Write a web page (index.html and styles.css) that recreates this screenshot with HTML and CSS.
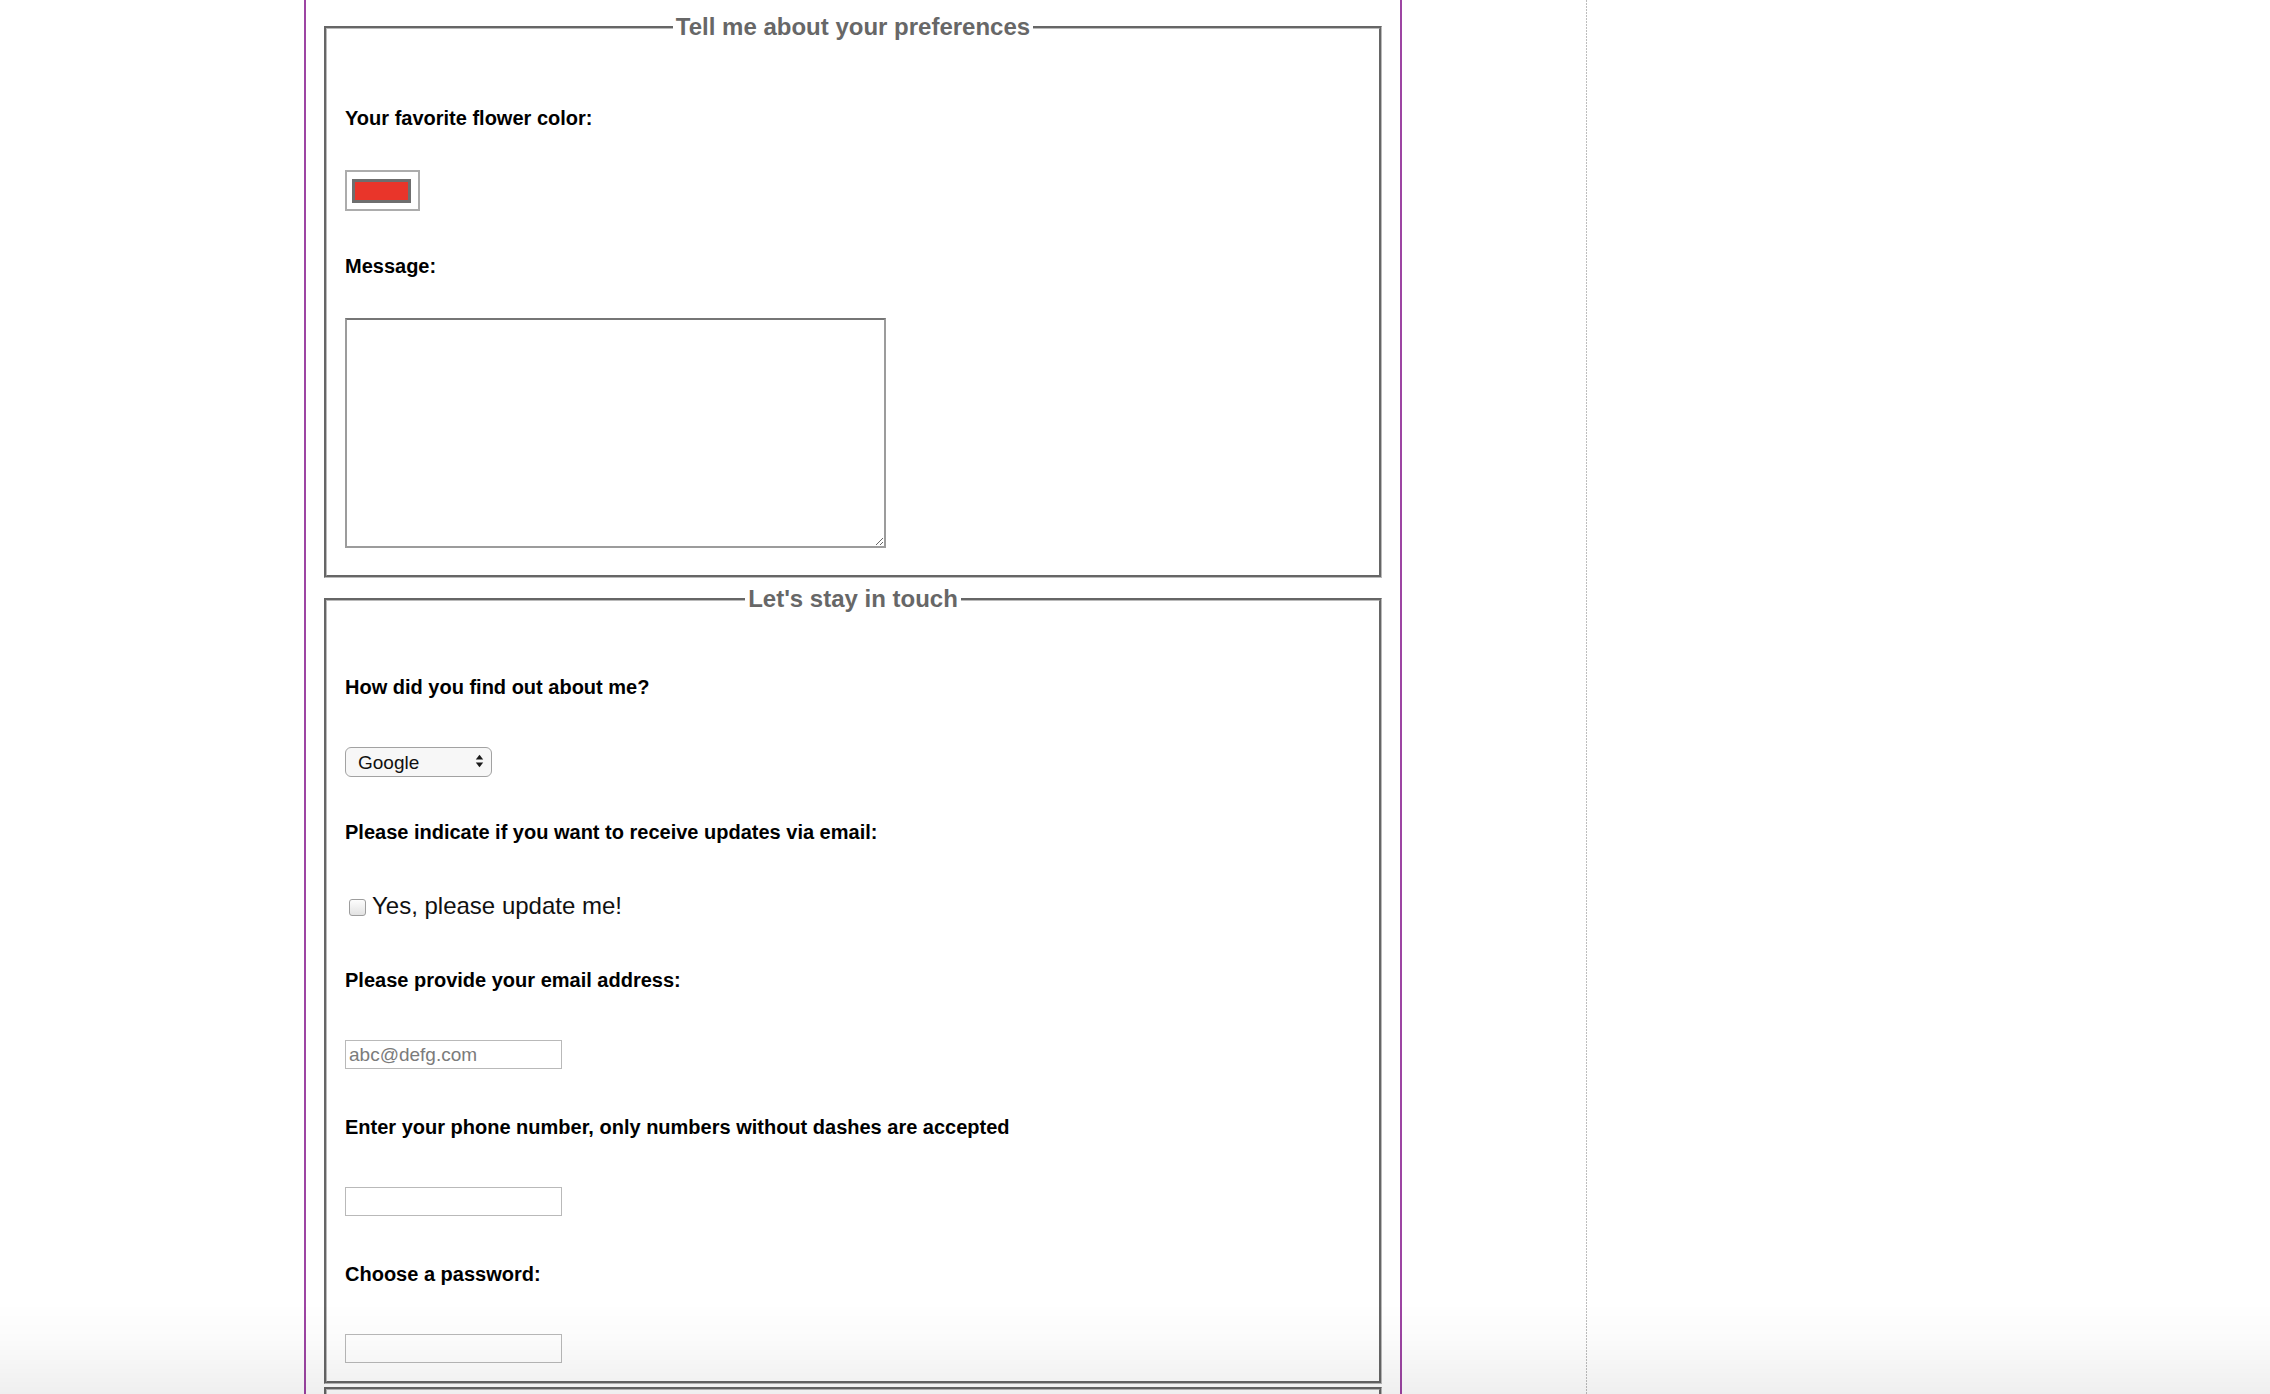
FILE: index.html
```html
<!DOCTYPE html>
<html lang="en">
<head>
<meta charset="utf-8">
<title>Contact form</title>
<link rel="stylesheet" href="styles.css">
</head>
<body>
<div class="page">
  <main class="main">
    <fieldset class="fs fs-first">
      <legend class="legend">Tell me about your preferences</legend>
      <label class="lbl lbl-first" for="flower">Your favorite flower color:</label>
      <div class="ctrl ctrl-tight"><input class="color" id="flower" type="color" value="#e9352a"></div>
      <label class="lbl lbl-short" for="msg">Message:</label>
      <div class="ctrl ctrl-tight"><textarea class="area" id="msg"></textarea></div>
    </fieldset>

    <fieldset class="fs fs-second">
      <legend class="legend">Let's stay in touch</legend>
      <label class="lbl lbl-second" for="source">How did you find out about me?</label>
      <div class="ctrl">
        <span class="sel-wrap">
          <select class="sel" id="source">
            <option>Google</option>
            <option>Friend</option>
            <option>Other</option>
          </select>
          <svg class="sel-arrows" width="9" height="14" viewBox="0 0 9 14" aria-hidden="true">
            <path d="M4.5 0.8 L8.2 5.6 L0.8 5.6 Z" fill="#1a1a1a"/>
            <path d="M4.5 13.2 L8.2 8.4 L0.8 8.4 Z" fill="#1a1a1a"/>
          </svg>
        </span>
      </div>
      <label class="lbl lbl-short" for="updates">Please indicate if you want to receive updates via email:</label>
      <div class="ctrl check-row">
        <input class="check" id="updates" type="checkbox">
        <label class="check-text" for="updates">Yes, please update me!</label>
      </div>
      <label class="lbl lbl-after-check" for="email">Please provide your email address:</label>
      <div class="ctrl"><input class="text" id="email" type="email" placeholder="abc@defg.com"></div>
      <label class="lbl" for="phone">Enter your phone number, only numbers without dashes are accepted</label>
      <div class="ctrl"><input class="text" id="phone" type="tel"></div>
      <label class="lbl" for="pwd">Choose a password:</label>
      <div class="ctrl"><input class="text" id="pwd" type="password"></div>
    </fieldset>

    <fieldset class="fs fs-third"></fieldset>
  </main>
  <div class="rail"></div>
  <div class="dots"></div>
</div>
<div class="fade"></div>
</body>
</html>
```

FILE: styles.css
```css
html, body {
  margin: 0;
  padding: 0;
  overflow: hidden;
  background: #ffffff;
}

body {
  font-family: "Liberation Sans", Arial, sans-serif;
  color: #000;
}

.page {
  display: flex;
  padding-left: 304px;
  min-height: 1394px;
}

.main {
  flex: 0 0 1098px;
  box-sizing: border-box;
  border-left: 2px solid #9d45a3;
  border-right: 2px solid #9d45a3;
  display: flex;
  flex-direction: column;
}

.rail {
  flex: 0 0 184px;
}

.dots {
  flex: 0 0 1px;
  background: repeating-linear-gradient(to bottom, #bdbdbd 0 2px, transparent 2px 3px);
}

.fs {
  margin: 6px 18px 0;
  padding: 0 18px 27px;
  border: 3px groove #bababa;
  min-width: 0;
  display: block;
}

.fs-first {
  margin-top: 13px;
}

.fs-second {
  margin-top: 7px;
  padding-bottom: 18px;
}

.fs-third {
  margin-top: 3px;
  height: 200px;
  padding: 0;
}

.legend {
  margin: 0 auto;
  padding: 0 3px;
  font-size: 24px;
  line-height: 28px;
  font-weight: bold;
  color: #676767;
}

.lbl {
  display: block;
  margin-top: 47px;
  font-size: 20px;
  line-height: 23px;
  font-weight: bold;
  color: #000;
}

.lbl-first {
  margin-top: 66px;
}

.lbl-second {
  margin-top: 63px;
}

.lbl-short {
  margin-top: 44px;
}

.lbl-after-check {
  margin-top: 49px;
}

.ctrl {
  margin-top: 48px;
}

.ctrl-tight {
  margin-top: 40px;
}

/* colour picker */
.color {
  -webkit-appearance: none;
  appearance: none;
  display: block;
  box-sizing: border-box;
  width: 75px;
  height: 41px;
  margin: 0;
  padding: 7px 7px 6px 5px;
  border: 2px solid #acacac;
  background: #ffffff;
  cursor: pointer;
}

.color::-webkit-color-swatch-wrapper {
  padding: 0;
}

.color::-webkit-color-swatch {
  border: 3px solid #6e6e6e;
  border-radius: 0;
}

/* textarea */
.area {
  display: block;
  box-sizing: border-box;
  width: 541px;
  height: 230px;
  margin: 0;
  border: 2px solid #9c9c9c;
  border-top-color: #767676;
  background: #fff;
  font-family: "Liberation Mono", monospace;
  font-size: 16px;
}

/* select */
.sel-wrap {
  position: relative;
  display: inline-block;
  vertical-align: top;
}

.sel {
  -webkit-appearance: none;
  appearance: none;
  display: block;
  box-sizing: border-box;
  width: 147px;
  height: 30px;
  margin: 0;
  padding: 0 0 0 12px;
  border: 1px solid #a2a2a2;
  border-radius: 6px;
  background: #f7f7f7;
  font-family: "Liberation Sans", Arial, sans-serif;
  font-size: 19px;
  color: #111;
}

.sel-arrows {
  position: absolute;
  right: 8px;
  top: 7px;
  pointer-events: none;
}

/* checkbox */
.check-row {
  display: flex;
  align-items: center;
  height: 28px;
}

.check {
  -webkit-appearance: none;
  appearance: none;
  box-sizing: border-box;
  width: 17px;
  height: 17px;
  margin: 2px 0 0 4px;
  border: 1px solid #9d9d9d;
  border-radius: 3px;
  background: linear-gradient(#fdfdfd, #e2e2e2);
}

.check-text {
  margin-left: 6px;
  font-size: 24px;
  line-height: 28px;
  color: #111;
}

/* text inputs */
.text {
  display: block;
  box-sizing: border-box;
  width: 217px;
  height: 29px;
  margin: 0;
  padding: 0 3px;
  border: 1px solid #b9b9b9;
  background: #fff;
  font-family: "Liberation Sans", Arial, sans-serif;
  font-size: 19px;
  color: #111;
  outline: none;
}

.text::placeholder {
  color: #7b7b7b;
}

.fade {
  position: fixed;
  left: 0;
  right: 0;
  bottom: 0;
  height: 92px;
  pointer-events: none;
  background: linear-gradient(to bottom, rgba(0, 0, 0, 0) 0%, rgba(0, 0, 0, 0.015) 40%, rgba(0, 0, 0, 0.062) 100%);
}
```
